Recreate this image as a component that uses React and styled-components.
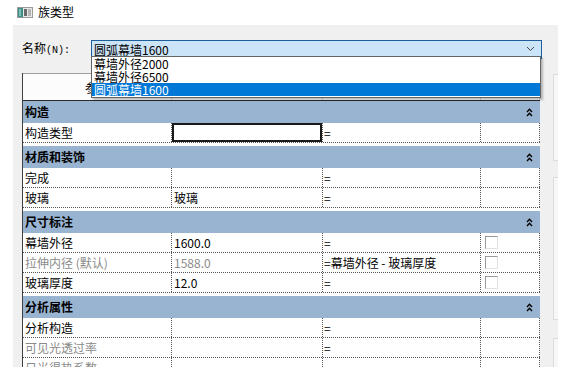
import styled, { createGlobalStyle } from 'styled-components';

const GlobalStyle = createGlobalStyle`
html, body {
  margin: 0;
  padding: 0;
  background: #ffffff;
}
body {
  font-family: 'Noto Sans CJK SC', 'Noto Sans', sans-serif;
  font-size: 12px;
  color: #000;
}
`;

const TitleBar = styled.div`
height: 25px;
display: flex;
align-items: center;
padding-left: 17px;
gap: 5px;
`;
const TitleText = styled.span`
font-size: 12px;
line-height: 14px;
margin-top: -2px;
`;
const DialogBody = styled.div`
margin-left: 13px;
width: 545px;
height: 342px;
background: #f0f0f0;
overflow: hidden;
display: flex;
flex-direction: column;
`;
const NameRow = styled.div`
position: relative;
display: flex;
align-items: center;
margin: 13px 0 0 9px;
`;
const NameLabel = styled.div`
width: 69px;
font-size: 12px;
line-height: 19px;
`;
const MonoPart = styled.span`
font-family: 'Liberation Mono', monospace;
font-size: 10px;
`;
const Combo = styled.div`
box-sizing: border-box;
width: 451px;
height: 19px;
border: 1px solid #1d5e9c;
background: #cce4f7;
display: flex;
align-items: center;
justify-content: space-between;
padding: 0 6px 0 2px;
line-height: 17px;
`;
const DropList = styled.div`
position: absolute;
z-index: 5;
left: 69px;
top: 18px;
width: 450px;
box-sizing: border-box;
border: 1px solid #646464;
background: #fff;
box-shadow: 2px 2px 2px rgba(0, 0, 0, 0.25);
padding-bottom: 1px;
`;
const DropItem = styled.div`
height: 13px;
line-height: 13px;
padding-left: 2px;
font-size: 12px;
background: ${({ $selected }) => ($selected ? '#0078d7' : 'transparent')};
color: ${({ $selected }) => ($selected ? '#fff' : '#000')};
white-space: nowrap;
`;
const ContentRow = styled.div`
display: flex;
margin-top: 13px;
flex: 1;
`;
const Grid = styled.div`
margin-left: 9px;
width: 518px;
box-sizing: border-box;
border-left: 1px solid #404040;
background: #fff;
flex-shrink: 0;
`;
const HeaderRow = styled.div`
display: grid;
grid-template-columns: 149px 151px 158px 59px;
height: 28px;
box-sizing: border-box;
border-top: 1px solid #a0a0a0;
border-bottom: 1px solid #2a2a2a;
background: #fcfcfc;
`;
const HeaderCell = styled.div`
display: flex;
align-items: center;
justify-content: center;
border-right: 1px solid #d5d5d5;
`;
const GroupRow = styled.div`
height: 22px;
margin-top: ${({ $first }) => ($first ? '0' : '3px')};
background: #99b4d1;
display: flex;
align-items: center;
justify-content: space-between;
padding: 0 7px 0 2px;
font-weight: 700;
line-height: 22px;
`;
const DataRow = styled.div`
display: grid;
grid-template-columns: 149px 151px 158px 59px;
height: 20px;
box-sizing: border-box;
border-bottom: 1px dotted #555;
`;
const Cell = styled.div`
box-sizing: border-box;
border-right: 1px dotted #555;
padding-left: ${({ $formula }) => ($formula ? '1px' : '2px')};
line-height: 19px;
white-space: nowrap;
overflow: hidden;
color: ${({ $muted }) => ($muted ? '#8a8a8a' : '#000')};
box-shadow: ${({ $active }) => ($active ? 'inset 0 0 0 2px #1a1a1a' : 'none')};
display: flex;
align-items: center;
`;
const CheckBox = styled.span`
display: inline-block;
width: 13px;
height: 13px;
box-sizing: border-box;
margin-left: 2px;
border-top: 1px solid #9a9a9a;
border-left: 1px solid #9a9a9a;
border-right: 1px solid #e2e2e2;
border-bottom: 1px solid #e2e2e2;
background: #fff;
`;
const SideStrip = styled.div`
flex: 1;
padding: 1px 0 0 13px;
display: flex;
flex-direction: column;
`;
const SideBox = styled.div`
height: ${({ $h }) => $h}px;
margin-top: ${({ $m }) => $m}px;
width: 30px;
box-sizing: border-box;
border: 1px solid #dcdcdc;
background: #f7f7f7;
`;

function FamilyIcon() {
  return (
    <svg width="16" height="11" viewBox="0 0 16 11">
      <rect x="0.5" y="0.5" width="15" height="10" fill="#e8e8e8" stroke="#9a9a9a" />
      <rect x="1" y="1" width="5" height="9" fill="#3f8f86" />
      <rect x="2" y="2" width="2" height="7" fill="#7cc0b6" />
      <rect x="7" y="2" width="3" height="7" fill="#6a6a6a" />
      <rect x="11" y="2" width="3" height="7" fill="#b5b5b5" />
    </svg>
  );
}

function Chevron() {
  return (
    <svg width="9" height="6" viewBox="0 0 9 6">
      <path d="M1 1 L4.5 4.5 L8 1" fill="none" stroke="#4a4a4a" strokeWidth="1" />
    </svg>
  );
}

function Collapse() {
  return (
    <svg width="7" height="9" viewBox="0 0 7 9">
      <path d="M1 4 L3.5 1.3 L6 4 M1 8 L3.5 5.3 L6 8" fill="none" stroke="#000" strokeWidth="1.4" />
    </svg>
  );
}

const groups = [
  {
    name: '构造',
    rows: [{ label: '构造类型', value: '', formula: '=', active: true }],
  },
  {
    name: '材质和装饰',
    rows: [
      { label: '完成', value: '', formula: '=' },
      { label: '玻璃', value: '玻璃', formula: '=' },
    ],
  },
  {
    name: '尺寸标注',
    rows: [
      { label: '幕墙外径', value: '1600.0', formula: '=', check: true },
      { label: '拉伸内径 (默认)', value: '1588.0', formula: '=幕墙外径 - 玻璃厚度', check: true, muted: true },
      { label: '玻璃厚度', value: '12.0', formula: '=', check: true },
    ],
  },
  {
    name: '分析属性',
    rows: [
      { label: '分析构造', value: '', formula: '=' },
      { label: '可见光透过率', value: '', formula: '=', muted: true },
      { label: '日光得热系数', value: '', formula: '=', muted: true },
    ],
  },
];

export default function App() {
  return (
    <>
      <GlobalStyle />
      <TitleBar>
        <FamilyIcon />
        <TitleText>族类型</TitleText>
      </TitleBar>
      <DialogBody>
        <NameRow>
          <NameLabel>
            名称<MonoPart>(N):</MonoPart>
          </NameLabel>
          <Combo>
            <span>圆弧幕墙1600</span>
            <Chevron />
          </Combo>
          <DropList>
            <DropItem>幕墙外径2000</DropItem>
            <DropItem>幕墙外径6500</DropItem>
            <DropItem $selected>圆弧幕墙1600</DropItem>
          </DropList>
        </NameRow>
        <ContentRow>
          <Grid>
            <HeaderRow>
              <HeaderCell>参数</HeaderCell>
              <HeaderCell>值</HeaderCell>
              <HeaderCell>公式</HeaderCell>
              <HeaderCell>锁定</HeaderCell>
            </HeaderRow>
            {groups.map((g, gi) => (
              <div key={g.name}>
                <GroupRow $first={gi === 0}>
                  <span>{g.name}</span>
                  <Collapse />
                </GroupRow>
                {g.rows.map((r) => (
                  <DataRow key={r.label}>
                    <Cell $muted={r.muted}>{r.label}</Cell>
                    <Cell $muted={r.muted} $active={r.active}>{r.value}</Cell>
                    <Cell $formula>{r.formula}</Cell>
                    <Cell>{r.check && <CheckBox />}</Cell>
                  </DataRow>
                ))}
              </div>
            ))}
          </Grid>
          <SideStrip>
            <SideBox $h={87} $m={0} />
            <SideBox $h={143} $m={16} />
            <SideBox $h={60} $m={18} />
          </SideStrip>
        </ContentRow>
      </DialogBody>
    </>
  );
}
